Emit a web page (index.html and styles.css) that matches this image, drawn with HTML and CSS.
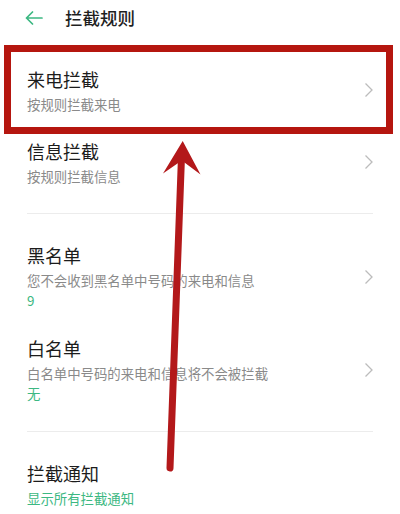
FILE: index.html
```html
<!DOCTYPE html>
<html lang="zh-CN">
<head>
<meta charset="utf-8">
<title>拦截规则</title>
<link rel="stylesheet" href="styles.css">
</head>
<body>
<div class="page">
  <header class="topbar">
    <svg class="back" width="18" height="14" viewBox="0 0 18 14"><path d="M17 7H1.5M7.5 1L1.5 7l6 6" fill="none" stroke="#3cb882" stroke-width="1.7" stroke-linecap="round" stroke-linejoin="round"/></svg>
    <h1 class="title">拦截规则</h1>
  </header>
  <ul class="list">
    <li class="item">
      <div class="text">
        <div class="name">来电拦截</div>
        <div class="desc">按规则拦截来电</div>
      </div>
      <svg class="chev" width="10" height="16" viewBox="0 0 10 16"><path d="M1.5 1.5L8 8l-6.5 6.5" fill="none" stroke="#bcbcbc" stroke-width="1.3"/></svg>
    </li>
    <li class="item">
      <div class="text">
        <div class="name">信息拦截</div>
        <div class="desc">按规则拦截信息</div>
      </div>
      <svg class="chev" width="10" height="16" viewBox="0 0 10 16"><path d="M1.5 1.5L8 8l-6.5 6.5" fill="none" stroke="#bcbcbc" stroke-width="1.3"/></svg>
    </li>
    <li class="divider"></li>
    <li class="item">
      <div class="text">
        <div class="name">黑名单</div>
        <div class="desc">您不会收到黑名单中号码的来电和信息</div>
        <div class="extra">9</div>
      </div>
      <svg class="chev" width="10" height="16" viewBox="0 0 10 16"><path d="M1.5 1.5L8 8l-6.5 6.5" fill="none" stroke="#bcbcbc" stroke-width="1.3"/></svg>
    </li>
    <li class="item">
      <div class="text">
        <div class="name">白名单</div>
        <div class="desc">白名单中号码的来电和信息将不会被拦截</div>
        <div class="extra">无</div>
      </div>
      <svg class="chev" width="10" height="16" viewBox="0 0 10 16"><path d="M1.5 1.5L8 8l-6.5 6.5" fill="none" stroke="#bcbcbc" stroke-width="1.3"/></svg>
    </li>
    <li class="divider divider-b"></li>
    <li class="item">
      <div class="text">
        <div class="name">拦截通知</div>
        <div class="desc green">显示所有拦截通知</div>
      </div>
    </li>
  </ul>
  <div class="highlight"></div>
  <svg class="pointer" width="400" height="514" viewBox="0 0 400 514">
    <path d="M170 468L181.3 162" stroke="#b3181a" stroke-width="7" stroke-linecap="round" fill="none"/>
    <path d="M182.7 141L163 173.5L181.8 160.5L200.5 174.5Z" fill="#b3181a"/>
  </svg>
</div>
</body>
</html>
```
FILE: styles.css
```css
* { box-sizing: border-box; }
html, body { margin: 0; padding: 0; background: #fff; }
body {
  font-family: "Noto Sans CJK SC", "Noto Sans", sans-serif;
  color: #1f1f1f;
}
.page {
  position: relative;
  width: 400px;
  height: 514px;
  overflow: hidden;
}
.topbar {
  height: 36px;
  display: flex;
  align-items: center;
  padding-left: 25px;
  margin-bottom: 18px;
}
.back { display: block; }
.title {
  margin: 0 0 0 22px;
  font-size: 17.5px;
  font-weight: 500;
  line-height: 36px;
}
.list {
  list-style: none;
  margin: 0;
  padding: 0;
}
.item {
  display: flex;
  align-items: center;
  padding: 12px 26px 12px 27px;
}
.text { flex: 1; }
.name {
  font-size: 18px;
  line-height: 26px;
  color: #1c1c1c;
}
.desc {
  margin-top: 2px;
  font-size: 13.4px;
  line-height: 20px;
  color: #8a8a8a;
}
.extra {
  font-size: 13.4px;
  line-height: 21px;
  color: #3cb882;
}
.green { color: #3cb882; }
.chev { display: block; }
.divider {
  height: 1px;
  margin: 15px 27px 16px;
  background: #ececec;
}
.divider-b { margin-top: 15px; }
.highlight {
  position: absolute;
  left: 4px;
  top: 45px;
  width: 389px;
  height: 89px;
  border: 7.5px solid #b5160f;
}
.pointer {
  position: absolute;
  left: 0;
  top: 0;
  pointer-events: none;
}
```
